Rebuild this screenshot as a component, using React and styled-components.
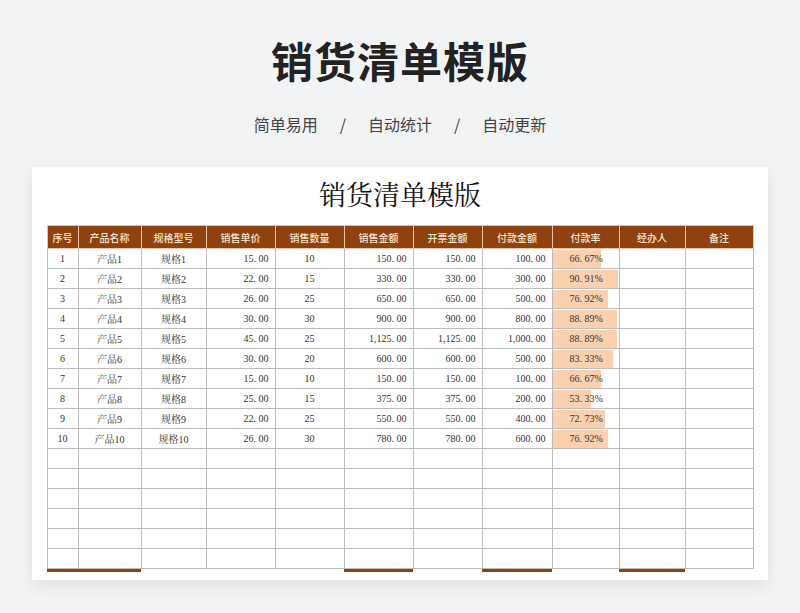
import React from "react";
import styled, { createGlobalStyle } from "styled-components";

const Global = createGlobalStyle`
  body { margin: 0; background: #f2f3f5; font-family: "Noto Sans CJK SC", sans-serif; }
`;

const Page = styled.div`
  width: 800px;
  height: 613px;
  display: flex;
  flex-direction: column;
  align-items: center;
`;

const Title = styled.h1`
  margin: 34px 0 0;
  font-size: 42px;
  font-weight: 700;
  color: #222;
  letter-spacing: 1px;
  line-height: 52px;
`;

const Sub = styled.div`
  margin-top: 26px;
  font-size: 16px;
  color: #444;
  display: flex;
  gap: 22px;
  line-height: 24px;
`;

const Card = styled.div`
  margin-top: 31px;
  width: 736px;
  height: 413px;
  background: #fff;
  box-shadow: 0 6px 14px rgba(0, 0, 0, 0.08);
  display: flex;
  flex-direction: column;
  align-items: center;
  box-sizing: border-box;
  padding: 0 15px;
`;

const SheetTitle = styled.div`
  font-family: "Noto Serif CJK SC", "Noto Sans CJK SC", serif;
  font-size: 27px;
  color: #111;
  height: 58px;
  line-height: 54px;
`;

const Table = styled.table`
  border-collapse: collapse;
  table-layout: fixed;
  width: 706px;
  font-family: "Liberation Serif", "Noto Serif CJK SC", "Noto Sans CJK SC", serif;
  font-size: 10px;
  color: #333;
`;

const Th = styled.th`
  background: #8f420f;
  color: #fbe6d4;
  font-weight: 500;
  font-family: "Noto Sans CJK SC", sans-serif;
  height: 22px;
  padding: 0;
  border: 1px solid #e8c4a8;
  font-size: 10px;
`;

const Td = styled.td`
  height: 19px;
  padding: 0 ${(p) => (p.$right ? "6px" : "0")};
  border: 1px solid #bdbdbd;
  text-align: ${(p) => (p.$right ? "right" : "center")};
`;

const BarCell = styled.div`
  position: relative;
  height: 18px;
  line-height: 18px;
`;

const Bar = styled.div`
  position: absolute;
  left: 0;
  top: 0;
  bottom: 0;
  background: #fbd0ae;
`;

const Pct = styled.span`
  position: relative;
  padding-left: 17px;
  display: block;
  text-align: left;
`;

const Mark = styled.td`
  height: 3px;
  padding: 0;
  background: ${(p) => (p.$on ? "#8f420f" : "transparent")};
`;

const cols = [31, 63, 65, 69, 69, 69, 69, 70, 67, 66, 68];
const heads = ["序号", "产品名称", "规格型号", "销售单价", "销售数量", "销售金额", "开票金额", "付款金额", "付款率", "经办人", "备注"];
const data = [
  [15, 10, 150, 100],
  [22, 15, 330, 300],
  [26, 25, 650, 500],
  [30, 30, 900, 800],
  [45, 25, 1125, 1000],
  [30, 20, 600, 500],
  [15, 10, 150, 100],
  [25, 15, 375, 200],
  [22, 25, 550, 400],
  [26, 30, 780, 600],
];
const fmt = (n) =>
  n.toLocaleString("en-US", { minimumFractionDigits: 2, maximumFractionDigits: 2 }).replace(".", ". ");
const marks = [1, 1, 0, 0, 0, 1, 0, 1, 0, 1, 0];

export default function App() {
  return (
    <Page>
      <Global />
      <Title>销货清单模版</Title>
      <Sub>
        <span>简单易用</span>
        <span>/</span>
        <span>自动统计</span>
        <span>/</span>
        <span>自动更新</span>
      </Sub>
      <Card>
        <SheetTitle>销货清单模版</SheetTitle>
        <Table>
          <colgroup>
            {cols.map((w, i) => (
              <col key={i} style={{ width: w }} />
            ))}
          </colgroup>
          <thead>
            <tr>
              {heads.map((h) => (
                <Th key={h}>{h}</Th>
              ))}
            </tr>
          </thead>
          <tbody>
            {data.map(([p, q, a, pay], i) => {
              const r = (pay / a) * 100;
              return (
                <tr key={i}>
                  <Td>{i + 1}</Td>
                  <Td>产品{i + 1}</Td>
                  <Td>规格{i + 1}</Td>
                  <Td $right>{fmt(p)}</Td>
                  <Td>{q}</Td>
                  <Td $right>{fmt(a)}</Td>
                  <Td $right>{fmt(a)}</Td>
                  <Td $right>{fmt(pay)}</Td>
                  <Td>
                    <BarCell>
                      <Bar style={{ width: `${r * 0.72}px` }} />
                      <Pct>{r.toFixed(2).replace(".", ". ")}%</Pct>
                    </BarCell>
                  </Td>
                  <Td />
                  <Td />
                </tr>
              );
            })}
            {Array.from({ length: 6 }).map((_, i) => (
              <tr key={"e" + i}>
                {cols.map((_, j) => (
                  <Td key={j} />
                ))}
              </tr>
            ))}
            <tr>
              {marks.map((m, j) => (
                <Mark key={j} $on={m} />
              ))}
            </tr>
          </tbody>
        </Table>
      </Card>
    </Page>
  );
}
